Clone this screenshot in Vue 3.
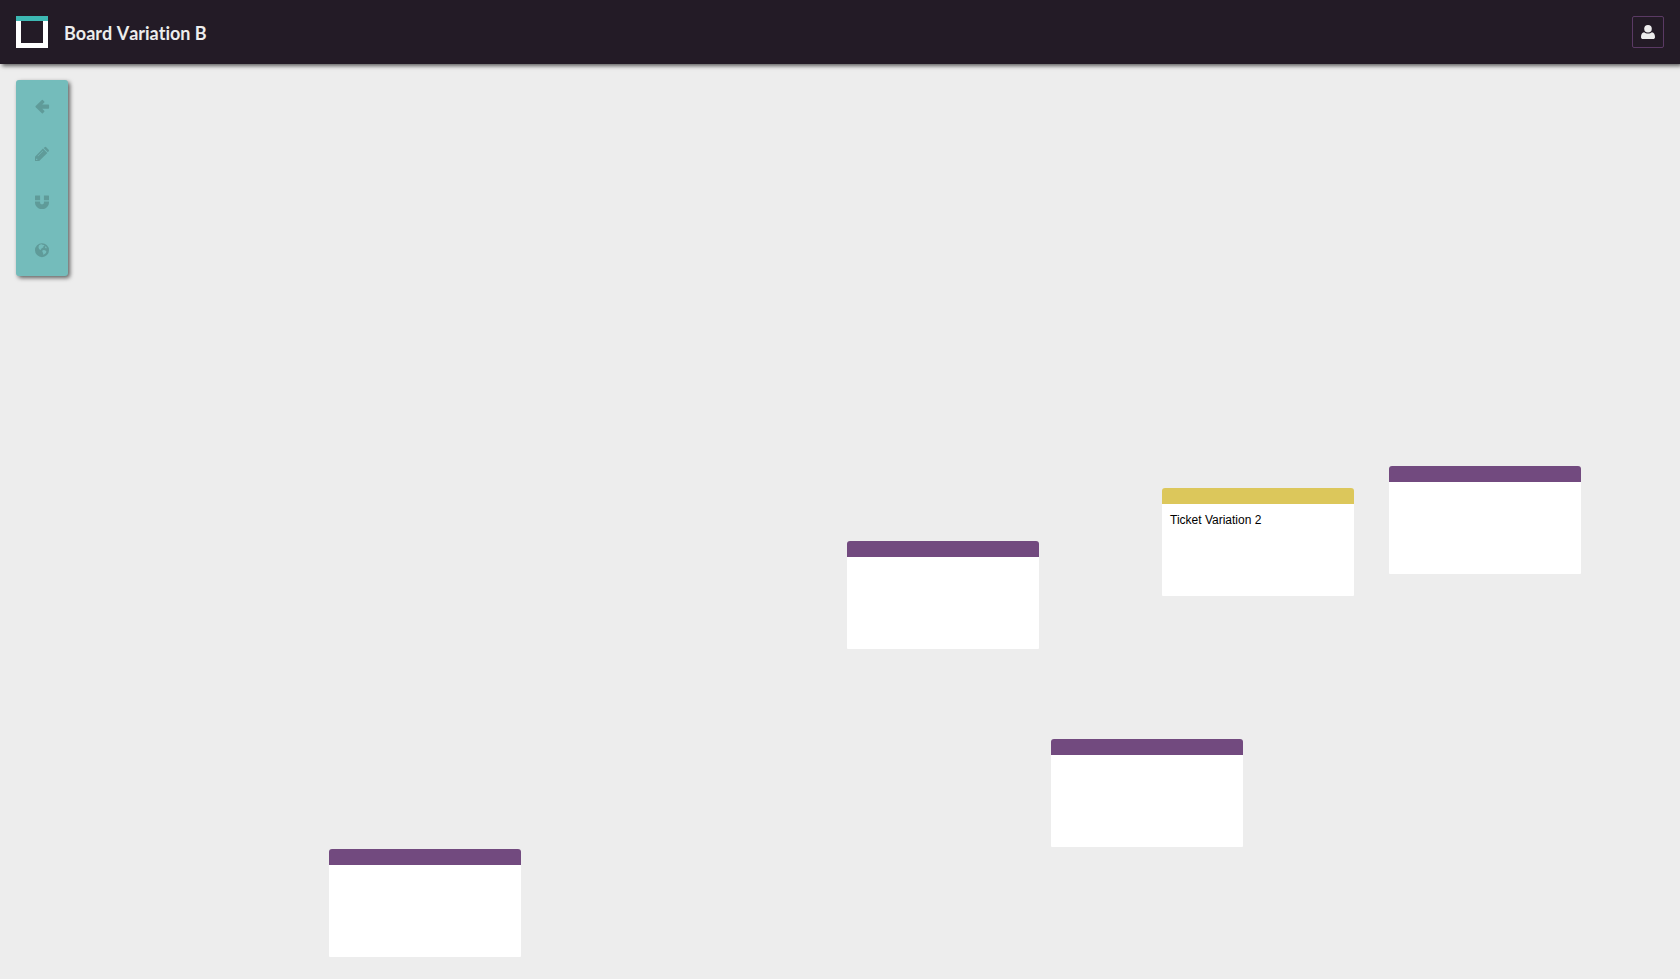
<script setup>
const tools = [
  {
    label: 'Back',
    path: 'M160 963Q160 925 190 895L880 225Q935 175 990 225L1150 385Q1200 440 1150 495L920 725H1600Q1690 725 1690 810V1115Q1690 1200 1600 1200H920L1150 1430Q1200 1485 1150 1540L990 1700Q935 1750 880 1700L190 1030Q160 1000 160 963Z'
  },
  {
    label: 'Edit',
    path: 'M112 1690V1190L1000 290L1490 780L580 1690ZM240 1440V1570H370V1440ZM400 1110L450 1160L1040 570L990 520ZM1080 230L1190 130Q1280 60 1370 140L1640 410Q1720 500 1650 590L1550 700Z'
  },
  {
    label: 'Snap',
    path: 'M1680 832v128q0 201-98.5 362t-274 262-411.5 100-411.5-100-274-262-98.5-362v-128h570v128q0 52 23.5 90t53.5 57 71 30 66 13 66-13 71-30 53.5-57 23.5-90v-128zM682 176v530h-570v-470q0-60 60-60zM1680 236v470h-570v-530h510q60 0 60 60z'
  },
  {
    label: 'Share',
    path: 'M896 128a784 784 0 1 0 0 1568a784 784 0 1 0 0-1568zM560 370L700 270L860 240L940 310L1120 330L1180 440L1040 480L1060 580L920 660L820 760L740 790L780 900L680 900L560 760L500 600zM1240 480L1360 520L1440 660L1340 720L1240 620zM960 930L1120 900L1280 960L1390 1060L1340 1220L1160 1380L1040 1420L1020 1240L930 1100z'
  }
]

const tickets = [
  { x: 329, y: 785, color: 'violet', text: '' },
  { x: 847, y: 477, color: 'violet', text: '' },
  { x: 1051, y: 675, color: 'violet', text: '' },
  { x: 1162, y: 424, color: 'yellow', text: 'Ticket Variation 2' },
  { x: 1389, y: 402, color: 'violet', text: '' }
]
</script>

<template>
  <div class="page">
    <header class="topbar">
      <a class="logo" href="#" aria-label="Home"></a>
      <h1 class="title">Board Variation B</h1>
      <button class="user" type="button" aria-label="Account">
        <svg class="icon" viewBox="0 0 16 16" aria-hidden="true">
          <circle cx="8" cy="4.7" r="3.8" />
          <path d="M4.1 8.2C5.1 9.1 6.5 9.5 8 9.5s2.9-.4 3.9-1.3C14 8.3 15 10.3 15 12.9c0 1.3-.8 2.1-2 2.1H3c-1.2 0-2-.8-2-2.1 0-2.6 1-4.6 3.1-4.7z" />
        </svg>
      </button>
    </header>
    <main class="board">
      <nav class="toolbar" aria-label="Board tools">
        <button v-for="tool in tools" :key="tool.label" class="tool" type="button" :aria-label="tool.label">
          <svg class="icon" viewBox="0 0 1792 1792" aria-hidden="true">
            <path :d="tool.path" fill-rule="evenodd" />
          </svg>
        </button>
      </nav>
      <article
        v-for="(ticket, i) in tickets"
        :key="i"
        class="ticket"
        :class="ticket.color"
        :style="{ left: ticket.x + 'px', top: ticket.y + 'px' }"
      >
        <p class="text">{{ ticket.text }}</p>
      </article>
    </main>
  </div>
</template>

<style>
body {
  background: #ededed;
}
</style>

<style scoped>
.page {
  display: flex;
  flex-direction: column;
  min-height: 100vh;
  overflow: hidden;
}
.topbar {
  position: relative;
  z-index: 1;
  display: flex;
  align-items: center;
  gap: 16px;
  box-sizing: border-box;
  height: 64px;
  padding: 0 16px;
  background: #231b26;
  box-shadow: 2px 2px 4px rgba(0, 0, 0, 0.6);
}
.logo {
  box-sizing: border-box;
  width: 32px;
  height: 32px;
  background: linear-gradient(#3db8b3 5px, #fff 5px);
  padding: 5px;
}
.logo::before {
  content: '';
  display: block;
  height: 22px;
  background: #231b26;
}
.title {
  margin: 0;
  padding-top: 2px;
  color: #ededed;
  font: 700 18px/24px Lato, sans-serif;
  font-kerning: none;
  font-variant-ligatures: none;
}
.user {
  display: flex;
  align-items: center;
  justify-content: center;
  width: 32px;
  height: 32px;
  margin-left: auto;
  padding: 0;
  border: 1px solid #5a3a64;
  border-radius: 2px;
  background: none;
  color: #ededed;
}
.icon {
  display: block;
  width: 16px;
  height: 16px;
  fill: currentColor;
}
.board {
  position: relative;
  flex: 1;
  padding: 16px;
}
.toolbar {
  display: flex;
  flex-direction: column;
  width: 48px;
  padding: 2px;
  border-radius: 3px;
  background: #74bcbb;
  box-shadow: 2px 2px 4px rgba(0, 0, 0, 0.6);
}
.tool {
  display: flex;
  align-items: center;
  justify-content: center;
  width: 48px;
  height: 48px;
  padding: 0;
  border: 0;
  background: none;
  color: #5f9b99;
}
.ticket {
  position: absolute;
  box-sizing: border-box;
  width: 192px;
  min-height: 108px;
  border-top: 16px solid #724a7f;
  border-radius: 3px 3px 1px 1px;
  background: #fff;
}
.yellow {
  border-top-color: #dcc75b;
}
.text {
  margin: 0;
  padding: 8px;
  color: #000;
  font: 12px/16px "Liberation Sans", Arial, sans-serif;
}
</style>
